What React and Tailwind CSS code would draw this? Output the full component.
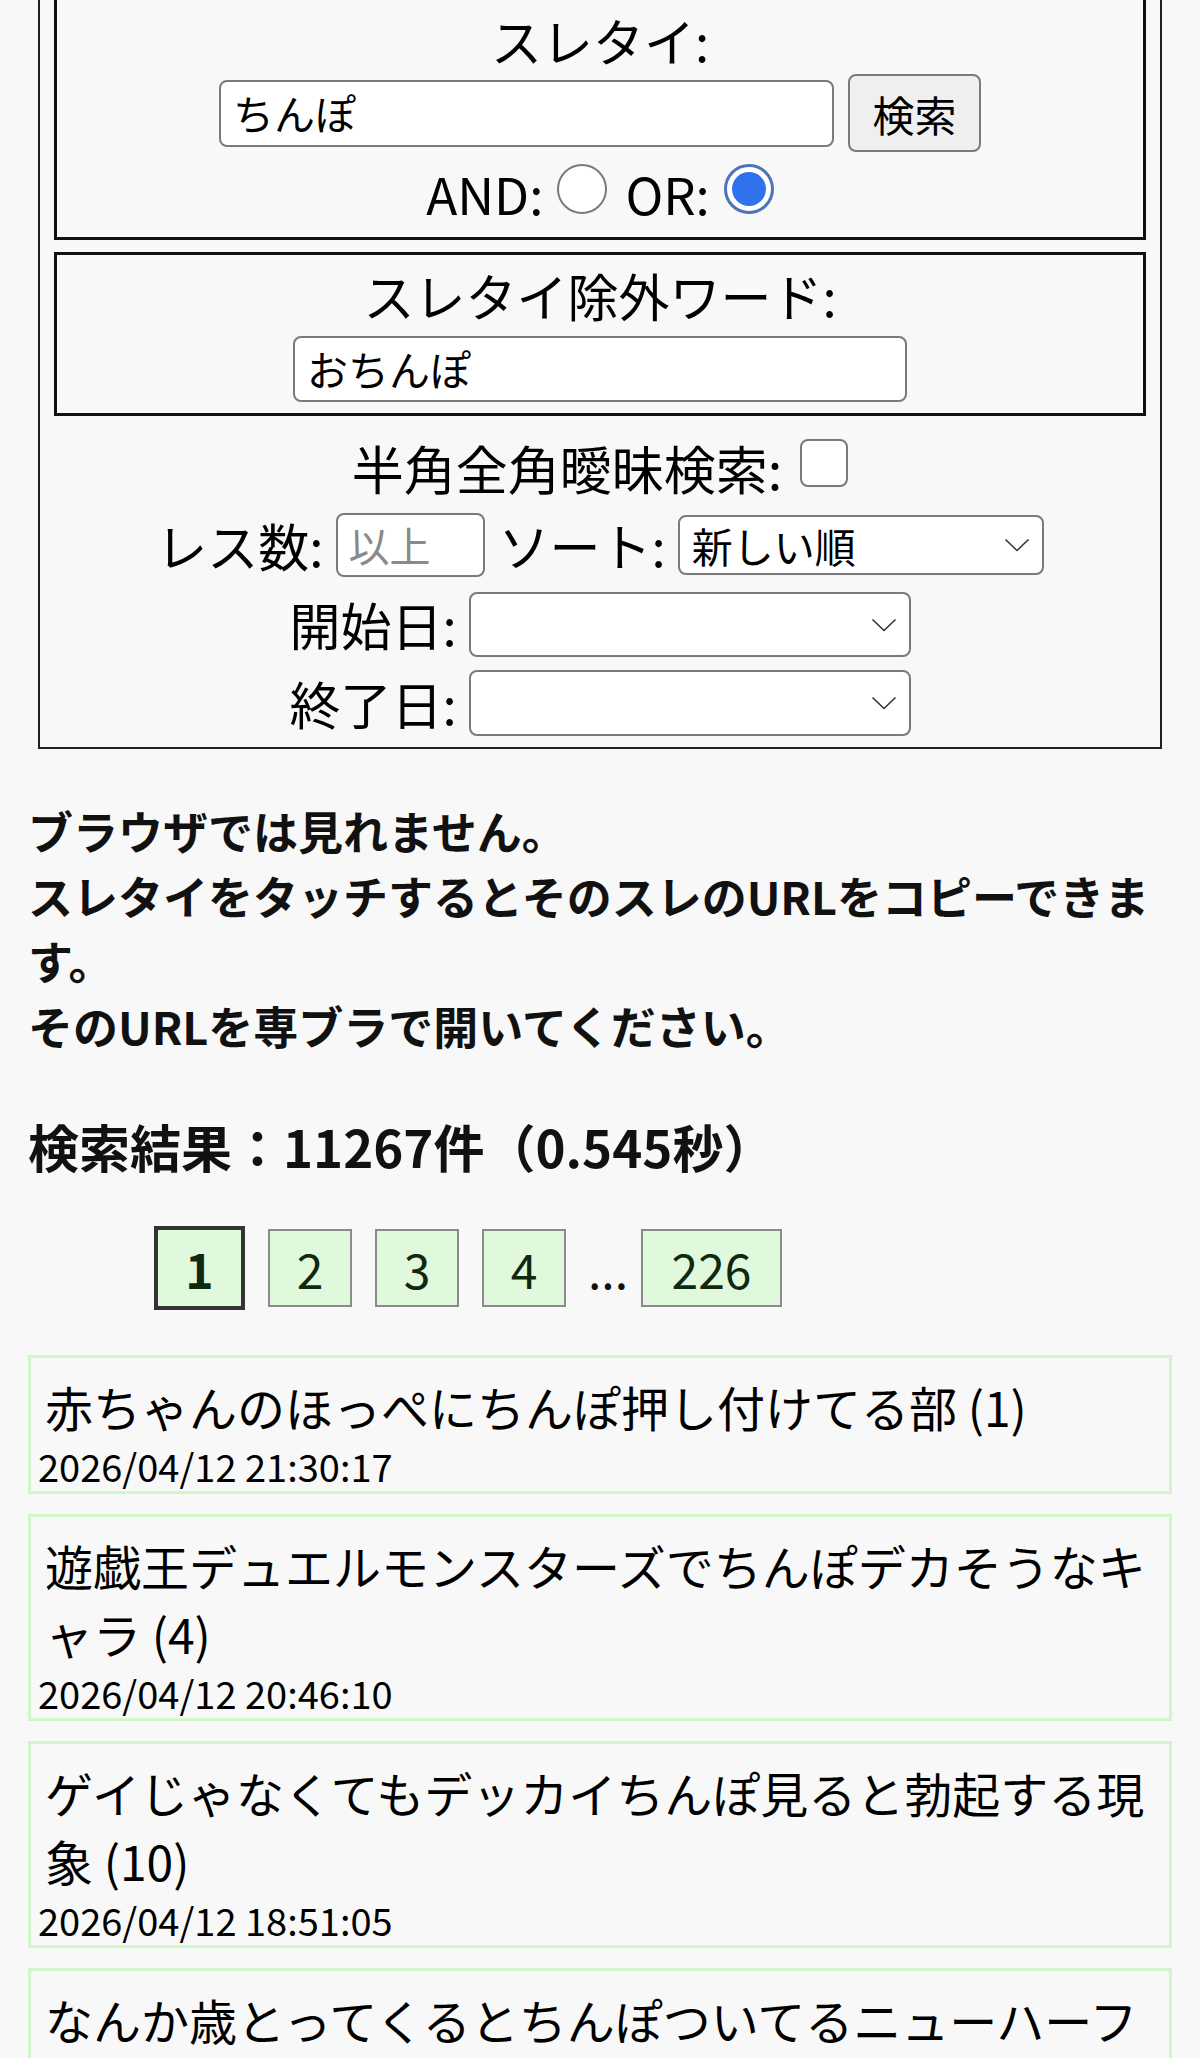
import React from 'react';

const threads = [
  { title: '赤ちゃんのほっぺにちんぽ押し付けてる部 (1)', date: '2026/04/12 21:30:17' },
  { title: '遊戯王デュエルモンスターズでちんぽデカそうなキャラ (4)', date: '2026/04/12 20:46:10' },
  { title: 'ゲイじゃなくてもデッカイちんぽ見ると勃起する現象 (10)', date: '2026/04/12 18:51:05' },
  { title: 'なんか歳とってくるとちんぽついてるニューハーフに惹かれる (7)', date: '2026/04/12 17:22:41' },
];

function Chevron() {
  return (
    <svg
      className="pointer-events-none absolute right-[14px] top-1/2 -translate-y-1/2"
      width="26"
      height="14"
      viewBox="0 0 26 14"
      fill="none"
      stroke="#333"
      strokeWidth="1.6"
    >
      <path d="M1.5 1.5L13 12.5L24.5 1.5" />
    </svg>
  );
}

function Select({ width, height, value }) {
  return (
    <div className={`relative ${width} ${height}`}>
      <div className="flex h-full w-full items-center rounded-[8px] border-2 border-[#7a7a7a] bg-white pl-[12px] text-[41px] leading-none">
        {value}
      </div>
      <Chevron />
    </div>
  );
}

function Radio({ checked }) {
  if (checked) {
    return (
      <span className="mb-[8px] flex h-[50px] w-[50px] items-center justify-center rounded-full border-[3px] border-[#4f72b8] bg-white">
        <span className="h-[34px] w-[34px] rounded-full bg-[#2f72ee]" />
      </span>
    );
  }
  return <span className="mb-[8px] h-[50px] w-[50px] rounded-full border-2 border-[#7a7a7a] bg-white" />;
}

export default function App() {
  return (
    <div className="h-[2058px] overflow-hidden bg-[#f8f8f8] px-[28px] font-['Noto_Sans_CJK_JP','Noto_Sans',sans-serif] text-black">
      {/* search form */}
      <div className="mx-[10px] -mt-[30px] border-2 border-[#222] pt-[8px] pb-[5px]">
        <div className="mx-[14px] flex flex-col items-center border-[3px] border-[#111] pt-[22px] pb-[7px]">
          <div className="text-[51px] leading-[70px]">スレタイ:</div>
          <div className="-mt-[1px] flex h-[78px] items-center gap-[14px]">
            <div className="flex h-[67px] w-[615px] items-center rounded-[8px] border-2 border-[#7a7a7a] bg-white pl-[12px] text-[41px]">
              ちんぽ
            </div>
            <button className="h-[78px] w-[133px] rounded-[8px] border-2 border-[#7a7a7a] bg-[#efefef] text-[42px]">
              検索
            </button>
          </div>
          <div className="mt-[4px] flex h-[74px] items-center text-[51px]">
            <span>AND:</span>
            <span className="ml-[14px] mr-[18px] flex items-center">
              <Radio />
            </span>
            <span>OR:</span>
            <span className="ml-[14px] flex items-center">
              <Radio checked />
            </span>
          </div>
        </div>

        <div className="mx-[14px] mt-[12px] flex flex-col items-center border-[3px] border-[#111] pt-[3px] pb-[11px]">
          <div className="text-[51px] leading-[74px]">スレタイ除外ワード:</div>
          <div className="mt-[4px] flex h-[66px] w-[614px] items-center rounded-[8px] border-2 border-[#7a7a7a] bg-white pl-[12px] text-[41px]">
            おちんぽ
          </div>
        </div>

        <div className="mt-[14px] flex h-[75px] items-center justify-center gap-[18px] text-[52px]">
          <span>半角全角曖昧検索:</span>
          <span className="mb-[10px] h-[48px] w-[48px] rounded-[8px] border-2 border-[#7a7a7a] bg-white" />
        </div>

        <div className="flex h-[80px] items-center justify-center text-[51px]">
          <span>レス数:</span>
          <div className="ml-[12px] flex h-[64px] w-[149px] items-center rounded-[8px] border-2 border-[#7a7a7a] bg-white pl-[11px] text-[41px] text-[#8a8a8a]">
            以上
          </div>
          <span className="ml-[14px] mr-[12px]">ソート:</span>
          <Select width="w-[366px]" height="h-[60px]" value="新しい順" />
        </div>

        <div className="flex h-[79px] items-center justify-center gap-[12px] text-[51px]">
          <span>開始日:</span>
          <Select width="w-[442px]" height="h-[65px]" value="" />
        </div>

        <div className="flex h-[78px] items-center justify-center gap-[12px] text-[51px]">
          <span>終了日:</span>
          <Select width="w-[442px]" height="h-[66px]" value="" />
        </div>
      </div>

      {/* notice */}
      <p className="mt-[49px] text-[45px] font-bold leading-[65px] text-[#111]">
        ブラウザでは見れません。
        <br />
        スレタイをタッチするとそのスレのURLをコピーできます。
        <br />
        そのURLを専ブラで開いてください。
      </p>

      <h3 className="mt-[51px] text-[51px] font-bold leading-[75px] text-[#111]">検索結果：11267件（0.545秒）</h3>

      {/* pagination */}
      <div className="mt-[42px] flex h-[84px] items-center pl-[126px] text-[48px] leading-[69px] text-[#102810]">
        <span className="flex h-[84px] w-[91px] items-center justify-center border-[4px] border-[#333] bg-[#e0f8dc] font-bold">
          1
        </span>
        <span className="ml-[23px] flex h-[78px] w-[84px] items-center justify-center border-2 border-[#8a8a8a] bg-[#e0f8dc]">
          2
        </span>
        <span className="ml-[23px] flex h-[78px] w-[84px] items-center justify-center border-2 border-[#8a8a8a] bg-[#e0f8dc]">
          3
        </span>
        <span className="ml-[23px] flex h-[78px] w-[84px] items-center justify-center border-2 border-[#8a8a8a] bg-[#e0f8dc]">
          4
        </span>
        <span className="ml-[22px] mr-[13px] text-[#111]">...</span>
        <span className="flex h-[78px] w-[141px] items-center justify-center border-2 border-[#8a8a8a] bg-[#e0f8dc]">
          226
        </span>
      </div>

      {/* thread list */}
      <div className="mt-[45px] flex flex-col gap-[20px]">
        {threads.map((t) => (
          <div key={t.date} className="border-[3px] border-[#d2f5ca] px-[7px] pt-[14px]">
            <div className="pl-[7px] text-[48px] leading-[68px]">{t.title}</div>
            <div className="text-[38px] leading-[51px]">{t.date}</div>
          </div>
        ))}
      </div>
    </div>
  );
}
